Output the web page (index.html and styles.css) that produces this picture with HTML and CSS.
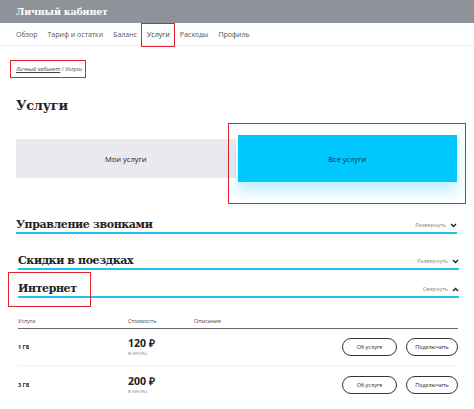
FILE: index.html
```html
<!DOCTYPE html>
<html lang="ru">
<head>
<meta charset="utf-8">
<link rel="stylesheet" href="styles.css">
</head>
<body>
<header class="topbar"><span class="brand">Личный кабинет</span></header>
<nav class="nav">
  <a class="nav-item">Обзор</a>
  <a class="nav-item">Тариф и остатки</a>
  <a class="nav-item">Баланс</a>
  <a class="nav-item active">Услуги</a>
  <a class="nav-item">Расходы</a>
  <a class="nav-item">Профиль</a>
</nav>
<main class="content">
  <div class="crumbs"><span class="crumb-link">Личный кабинет</span> / Услуги</div>
  <h1 class="title">Услуги</h1>
  <div class="tabs">
    <div class="tab">Мои услуги</div>
    <div class="tab tab-on">Все услуги</div>
  </div>
  <section class="sec">
    <h2 class="sec-title">Управление звонками</h2>
    <span class="toggle">Развернуть <svg width="7" height="5" viewBox="0 0 7 5"><path d="M1 1l2.5 2.5L6 1" fill="none" stroke="#222" stroke-width="1.4"/></svg></span>
  </section>
  <section class="sec sec2">
    <h2 class="sec-title">Скидки в поездках</h2>
    <span class="toggle">Развернуть <svg width="7" height="5" viewBox="0 0 7 5"><path d="M1 1l2.5 2.5L6 1" fill="none" stroke="#222" stroke-width="1.4"/></svg></span>
  </section>
  <section class="sec sec3">
    <h2 class="sec-title marked">Интернет</h2>
    <span class="toggle">Свернуть <svg width="7" height="5" viewBox="0 0 7 5"><path d="M1 4l2.5-2.5L6 4" fill="none" stroke="#222" stroke-width="1.4"/></svg></span>
  </section>
  <div class="table">
    <div class="thead">
      <span class="c1">Услуга</span><span class="c2">Стоимость</span><span class="c3">Описание</span>
    </div>
    <div class="row">
      <span class="c1 name">1 ГБ</span>
      <span class="c2 price"><b>120 ₽</b><small>в месяц</small></span>
      <span class="c3"></span>
      <span class="btns"><span class="btn">Об услуге</span><span class="btn">Подключить</span></span>
    </div>
    <div class="row last">
      <span class="c1 name">3 ГБ</span>
      <span class="c2 price"><b>200 ₽</b><small>в месяц</small></span>
      <span class="c3"></span>
      <span class="btns"><span class="btn">Об услуге</span><span class="btn">Подключить</span></span>
    </div>
  </div>
</main>
</body>
</html>
```
FILE: styles.css
```css
* { box-sizing: border-box; }
html, body { margin: 0; padding: 0; background: #fff; }
body { width: 474px; height: 409px; overflow: hidden; font-family: "Open Sans", "Liberation Sans", sans-serif; color: #222; }

.topbar { height: 23px; background: #8e9299; display: flex; align-items: center; padding-left: 16px; }
.brand { font-family: "DejaVu Serif", serif; font-weight: bold; font-size: 9.5px; color: #fff; letter-spacing: -0.2px; }

.nav { height: 23px; display: flex; align-items: center; padding-left: 16px; gap: 10px; border-bottom: 1px solid #eceef0; }
.nav-item { font-size: 7px; color: #555; position: relative; }
.nav-item.active { color: #333; }
.nav-item.active::after { content: ""; position: absolute; left: -6px; right: -5px; top: -7px; bottom: -8px; border: 1.5px solid #e0212b; }

.content { padding: 0 16px 0 16px; }

.crumbs { margin-top: 19px; font-size: 5.5px; color: #444; font-style: italic; display: inline-block; position: relative; }
.crumbs::after { content: ""; position: absolute; left: -6px; right: -4px; top: -5px; bottom: -5px; border: 1.5px solid #e0212b; }
.crumb-link { text-decoration: underline; }

.title { margin: 20px 0 0 0; font-family: "DejaVu Serif", serif; font-weight: bold; font-size: 13px; line-height: 20px; letter-spacing: -0.3px; }

.tabs { margin-top: 19px; display: flex; align-items: center; gap: 2px; width: 441px; }
.tab { flex: 1 1 0; height: 39px; background: #e9e9ee; display: flex; align-items: center; justify-content: center; font-size: 7.5px; color: #222; }
.tab-on { height: 47px; background: #00c8ff; color: #1a2a3a; box-shadow: 0 10px 12px rgba(0, 200, 255, 0.25); position: relative; }
.tab-on::after { content: ""; position: absolute; left: -10px; right: -9px; top: -12px; bottom: -22px; border: 1.5px solid #e0212b; }

.sec { margin-top: 36px; height: 16px; display: flex; align-items: flex-end; justify-content: space-between; border-bottom: 2.5px solid #1fc3f0; width: 441px; padding-bottom: 1px; }
.sec2 { margin-top: 20px; margin-left: 2px; }
.sec3 { margin-top: 12px; margin-left: 2px; }
.sec-title { margin: 0; font-family: "DejaVu Serif", serif; font-weight: bold; font-size: 11px; letter-spacing: -0.4px; line-height: 13px; }
.marked { position: relative; }
.marked::after { content: ""; position: absolute; left: -10px; right: -14px; top: -10px; bottom: -12px; border: 1.5px solid #e0212b; }
.toggle { font-size: 5.5px; color: #888; display: flex; align-items: center; gap: 4px; padding-bottom: 2px; }

.table { margin-left: 2px; width: 440px; margin-top: 16px; }
.thead { display: flex; font-size: 5.5px; color: #444; height: 15px; align-items: center; border-bottom: 1.5px solid #6c6c6c; }
.c1 { width: 110px; }
.c2 { width: 66px; }
.c3 { flex: 1; }
.row { display: flex; align-items: center; height: 37px; border-bottom: 1px solid #f0f0f0; }
.row.last { border-bottom: none; }
.name { font-size: 5.5px; font-weight: bold; }
.price { display: flex; flex-direction: column; }
.price b { font-size: 10.5px; font-weight: bold; line-height: 12px; }
.price small { font-size: 5px; color: #999; line-height: 8px; }
.btns { display: flex; gap: 9px; }
.btn { display: inline-flex; align-items: center; justify-content: center; height: 18px; border: 1.2px solid #333; border-radius: 9px; font-size: 5.5px; color: #222; padding: 0 10px; }
.btn:first-child { width: 55px; }
.btn:last-child { width: 52px; }
```
